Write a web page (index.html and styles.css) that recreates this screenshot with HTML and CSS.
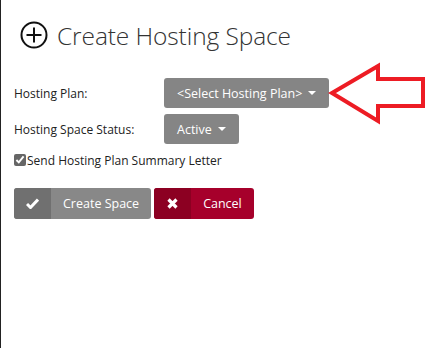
FILE: index.html
```html
<!DOCTYPE html>
<html lang="en">
<head>
  <meta charset="UTF-8">
  <title>Create Hosting Space</title>
  <link rel="stylesheet" href="styles.css">
</head>
<body>

<div class="page">
  <h1 class="title">
    <svg class="title-icon" width="28" height="28" viewBox="0 0 28 28">
      <circle cx="14" cy="14" r="12.5" fill="none" stroke="#111" stroke-width="2"/>
      <path d="M14 6.5v15M6.5 14h15" stroke="#111" stroke-width="2"/>
    </svg>
    <span>Create Hosting Space</span>
  </h1>

  <div class="form">
    <div class="row">
      <label class="label">Hosting Plan:</label>
      <div class="field">
        <button class="dropdown">&lt;Select Hosting Plan&gt; <span class="caret"></span></button>
      </div>
    </div>
    <div class="row">
      <label class="label">Hosting Space Status:</label>
      <div class="field">
        <button class="dropdown">Active <span class="caret"></span></button>
      </div>
    </div>
    <label class="check">
      <input type="checkbox" checked>Send Hosting Plan Summary Letter
    </label>
  </div>

  <div class="actions">
    <button class="btn btn-create">
      <span class="btn-icon">
        <svg width="13" height="11" viewBox="0 0 13 11"><path d="M1 6l3.5 3.5L12 1.5" fill="none" stroke="#fff" stroke-width="3"/></svg>
      </span>
      <span class="btn-text">Create Space</span>
    </button>
    <button class="btn btn-cancel">
      <span class="btn-icon">
        <svg width="11" height="11" viewBox="0 0 11 11"><path d="M1.5 1.5l8 8M9.5 1.5l-8 8" stroke="#fff" stroke-width="3.2"/></svg>
      </span>
      <span class="btn-text">Cancel</span>
    </button>
  </div>

  <!-- annotation arrow -->
  <svg class="arrow" width="427" height="348" viewBox="0 0 427 348">
    <polygon points="332,93 378,66 378,79 423,79 423,106 378,106 378,121" fill="none" stroke="#ed1c24" stroke-width="4" stroke-linejoin="miter"/>
  </svg>
</div>

</body>
</html>
```

FILE: styles.css
```css
* {
  margin: 0;
  padding: 0;
  box-sizing: border-box;
}

body {
  background: #fff;
  font-family: 'Open Sans', 'Noto Sans', sans-serif;
  font-size: 12px;
  color: #222;
  height: 100vh;
  overflow: hidden;
}

.page {
  position: relative;
  height: 100%;
  border-left: 1px solid #222;
  padding-left: 13px;
}

.title {
  display: flex;
  align-items: center;
  gap: 9px;
  height: 70px;
  padding-left: 6px;
  font-size: 24.5px;
  font-weight: 300;
  color: #333;
  letter-spacing: -0.1px;
}

.title-icon {
  flex: none;
}

.form {
  display: flex;
  flex-direction: column;
  gap: 6px;
  margin-top: 8px;
}

.row {
  display: flex;
  align-items: center;
}

.label {
  width: 150px;
  color: #222;
}

.dropdown {
  display: flex;
  align-items: center;
  gap: 6px;
  height: 30px;
  padding: 0 13px;
  background: #858585;
  color: #fff;
  border: none;
  border-radius: 3px;
  font-family: inherit;
  font-size: 12.5px;
}

.caret {
  width: 0;
  height: 0;
  border-left: 4px solid transparent;
  border-right: 4px solid transparent;
  border-top: 4px solid #fff;
}

.check {
  display: flex;
  align-items: center;
  height: 20px;
}

.check input {
  width: 12px;
  height: 12px;
  margin: 0 1px 0 0;
  accent-color: #666;
}

.actions {
  display: flex;
  gap: 3px;
  margin-top: 18px;
}

.btn {
  display: flex;
  height: 31px;
  border: none;
  border-radius: 3px;
  overflow: hidden;
  color: #fff;
  font-family: inherit;
  font-size: 12.5px;
}

.btn-icon {
  width: 37px;
  display: flex;
  align-items: center;
  justify-content: center;
}

.btn-text {
  display: flex;
  align-items: center;
  padding: 0 12px;
}

.btn-create {
  background: #888;
}

.btn-create .btn-icon {
  background: #707070;
}

.btn-cancel {
  background: #a6002b;
}

.btn-cancel .btn-icon {
  background: #8c0022;
}

.arrow {
  position: absolute;
  top: 0;
  left: -1px;
  pointer-events: none;
}
```
